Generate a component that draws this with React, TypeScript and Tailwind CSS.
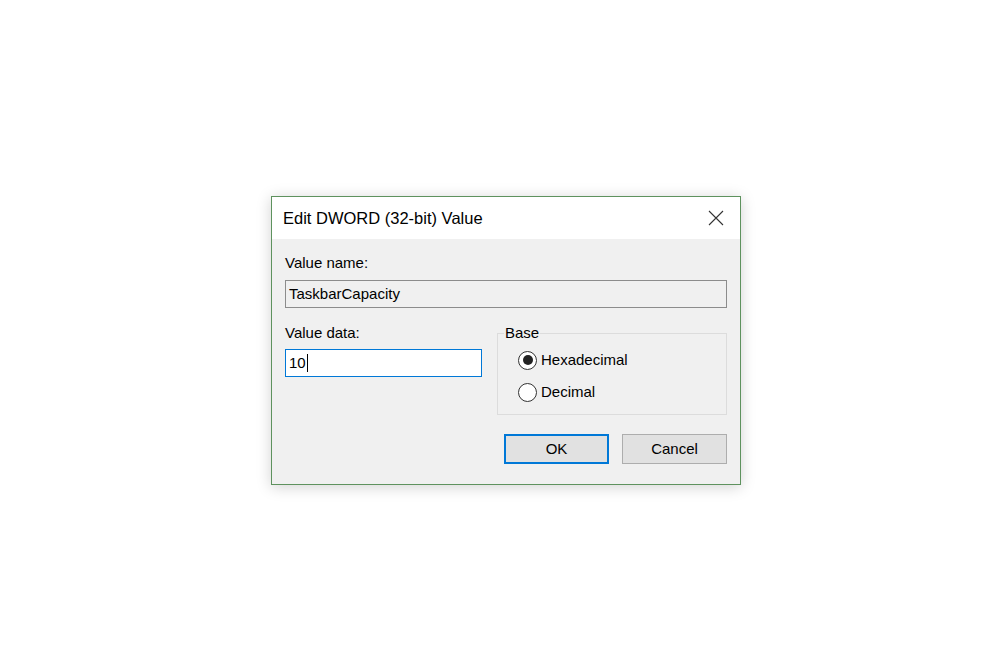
import * as React from "react";

function CloseIcon() {
  return (
    <svg width="16" height="16" viewBox="0 0 16 16" className="block">
      <path d="M1 1 L15 15 M15 1 L1 15" stroke="#333" strokeWidth="1.1" fill="none" />
    </svg>
  );
}

function Radio({ checked, label }: { checked: boolean; label: string }) {
  return (
    <div className="flex h-[32px] items-center">
      <span className="flex h-[19px] w-[19px] items-center justify-center rounded-full border border-[#333] bg-white">
        {checked && <span className="h-[10px] w-[10px] rounded-full bg-[#222]" />}
      </span>
      <span className="ml-[4px] text-[15px] leading-[18px] text-black">{label}</span>
    </div>
  );
}

export default function App() {
  return (
    <div className="min-h-screen w-full bg-white pl-[271px] pt-[196px] font-['Liberation_Sans',Arial,sans-serif]">
      <div className="w-[470px] border border-[#5e925e] bg-[#f0f0f0] shadow-[0_2px_14px_rgba(0,0,0,0.18)]">
        {/* title bar */}
        <div className="flex h-[42px] items-center justify-between bg-white pl-[11px] pr-[16px]">
          <span className="text-[16.5px] leading-[20px] text-black">Edit DWORD (32-bit) Value</span>
          <CloseIcon />
        </div>

        <div className="px-[13px] pb-[20px] pt-[15px]">
          <div className="text-[15px] leading-[18px] text-black">Value name:</div>
          <div className="mt-[8px] flex h-[28px] items-center border border-[#8c8c8c] bg-[#f0f0f0] pl-[3px] text-[15px] text-black">
            TaskbarCapacity
          </div>

          <div className="mt-[16px] flex gap-[15px]">
            <div className="w-[197px]">
              <div className="text-[15px] leading-[18px] text-black">Value data:</div>
              <div className="mt-[7px] flex h-[28px] items-center border border-[#0078d7] bg-white pl-[3px] text-[15px] text-black">
                <span>10</span>
                <span className="ml-[1px] h-[18px] w-[1px] bg-black" />
              </div>
            </div>

            <fieldset className="h-[91px] flex-1 border border-[#dcdcdc]">
              <legend className="ml-[6px] px-[1px] text-[15px] leading-[18px] text-black">Base</legend>
              <div className="mt-[2px] pl-[20px]">
                <Radio checked label="Hexadecimal" />
                <Radio checked={false} label="Decimal" />
              </div>
            </fieldset>
          </div>

          <div className="mt-[19px] flex justify-end gap-[13px]">
            <button className="flex h-[30px] w-[105px] items-center justify-center border-2 border-[#0078d7] bg-[#e1e1e1] text-[15px] text-black">
              OK
            </button>
            <button className="flex h-[30px] w-[105px] items-center justify-center border border-[#adadad] bg-[#e1e1e1] text-[15px] text-black">
              Cancel
            </button>
          </div>
        </div>
      </div>
    </div>
  );
}
